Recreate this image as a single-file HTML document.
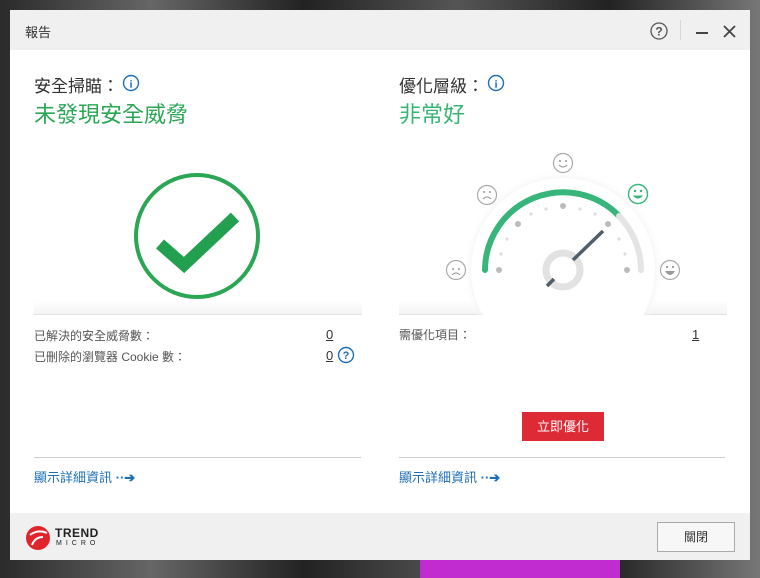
<!DOCTYPE html>
<html><head><meta charset="utf-8"><style>
*{margin:0;padding:0;box-sizing:border-box}
body{width:760px;height:578px;overflow:hidden;background:#3a3a3a;position:relative;font-family:"Liberation Sans","Noto Sans CJK TC",sans-serif;}
.bg1{position:absolute;left:0;top:0;width:760px;height:578px;background:linear-gradient(90deg,#2a2a2a,#666 20%,#222 40%,#555 60%,#222 80%,#777)}
.bg2{position:absolute;left:420px;top:560px;width:200px;height:18px;background:#c02ccf}
.win{position:absolute;left:10px;top:10px;width:740px;height:550px;background:#fff}
.title{position:absolute;left:0;top:0;width:740px;height:40px;background:#f0f0f0}
.foot{position:absolute;left:0;top:503px;width:740px;height:47px;background:#f0f0f0}
.a{position:absolute;white-space:nowrap}
.lbl{font-size:12px;color:#555}
.h{font-size:17px;color:#333}
.g{font-size:22px;color:#2aa654}
.g2{font-size:22px;color:#37b573}
.link{font-size:13px;color:#1d6fb5}
.line{position:absolute;height:1px;background:#cfcfcf}
.shadow{position:absolute;height:14px;background:linear-gradient(#fff,#f4f4f4);}
</style></head><body>
<div class="bg1"></div><div class="bg2"></div>
<div class="win">
 <div class="title">
  <div class="a" style="left:15px;top:12px;font-size:13px;color:#333">報告</div>
  <svg class="a" style="left:639px;top:11px" width="20" height="20"><circle cx="10" cy="10" r="8" fill="none" stroke="#555" stroke-width="1.3"/><text x="10" y="14.5" font-size="12" font-weight="bold" text-anchor="middle" fill="#555" font-family="Liberation Sans">?</text></svg>
  <div class="a" style="left:670px;top:10px;width:1px;height:20px;background:#d8d8d8"></div>
  <div class="a" style="left:686px;top:22px;width:12px;height:2px;background:#444"></div>
  <svg class="a" style="left:713px;top:15px" width="13" height="13"><path d="M1 1L12 12M12 1L1 12" stroke="#444" stroke-width="1.8"/></svg>
 </div>
 <div class="a h" style="left:24px;top:62px">安全掃瞄：</div>
 <svg class="a" style="left:112px;top:64px" width="18" height="18"><circle cx="9" cy="9" r="7.5" fill="none" stroke="#1d6fb5" stroke-width="1.4"/><text x="9" y="13.5" font-size="11" font-weight="bold" text-anchor="middle" fill="#1d6fb5" font-family="Liberation Serif">i</text></svg>
 <div class="a g" style="left:24px;top:87px">未發現安全威脅</div>
 <div class="a h" style="left:389px;top:62px">優化層級：</div>
 <svg class="a" style="left:477px;top:64px" width="18" height="18"><circle cx="9" cy="9" r="7.5" fill="none" stroke="#1d6fb5" stroke-width="1.4"/><text x="9" y="13.5" font-size="11" font-weight="bold" text-anchor="middle" fill="#1d6fb5" font-family="Liberation Serif">i</text></svg>
 <div class="a g2" style="left:389px;top:87px">非常好</div>

 <div class="shadow" style="left:24px;top:290px;width:328px"></div>
 <div class="line" style="left:24px;top:304px;width:328px;background:#e2e2e2"></div>
 <svg class="a" style="left:110px;top:150px" width="160" height="150"><circle cx="77" cy="76" r="61" fill="none" stroke="#2aa654" stroke-width="4"/><path d="M40 84L64 105L115 57" fill="none" stroke="#22a050" stroke-width="12" stroke-linejoin="miter"/></svg>

 <div class="shadow" style="left:389px;top:290px;width:328px"></div>
 <div class="line" style="left:389px;top:304px;width:328px;background:#e2e2e2"></div>
 <svg class="a" style="left:420px;top:130px" width="300" height="175">
  <defs><radialGradient id="sh" cx="0.5" cy="0.5" r="0.5"><stop offset="0.88" stop-color="#ececec"/><stop offset="1" stop-color="#fff" stop-opacity="0"/></radialGradient></defs>
  <circle cx="133" cy="130" r="100" fill="url(#sh)"/>
  <circle cx="133" cy="130" r="92" fill="#fff"/>
  <path d="M55 130A78 78 0 0 1 189 76" fill="none" stroke="#37b57a" stroke-width="6" stroke-linecap="round"/>
  <path d="M189 76A78 78 0 0 1 211 130" fill="none" stroke="#e4e4e4" stroke-width="6" stroke-linecap="round"/>
  <g fill="#bbb"><circle cx="69" cy="130" r="3"/><circle cx="88" cy="84" r="3"/><circle cx="133" cy="66" r="3"/><circle cx="178" cy="84" r="3"/><circle cx="197" cy="130" r="3"/></g>
  <g fill="#ddd"><circle cx="71" cy="114" r="1.6"/><circle cx="77" cy="99" r="1.6"/><circle cx="101" cy="74" r="1.6"/><circle cx="116" cy="69" r="1.6"/><circle cx="150" cy="69" r="1.6"/><circle cx="165" cy="74" r="1.6"/><circle cx="189" cy="99" r="1.6"/><circle cx="195" cy="114" r="1.6"/></g>
  <circle cx="133" cy="130" r="17" fill="none" stroke="#e2e2e2" stroke-width="7"/>
  <path d="M143 120L173 91" stroke="#4f5f6b" stroke-width="3.5"/>
  <path d="M117 146L124 139" stroke="#4f5f6b" stroke-width="3.5"/>
  <g fill="none" stroke="#aaa" stroke-width="1.2">
   <circle cx="26" cy="130" r="9.5"/><circle cx="57" cy="55" r="9.5"/><circle cx="133" cy="23" r="9.5"/><circle cx="240" cy="130" r="9.5"/>
  </g>
  <circle cx="208" cy="54" r="9.5" fill="none" stroke="#37b57a" stroke-width="1.4"/>
  <g fill="#999"><circle cx="23" cy="129" r="1"/><circle cx="29" cy="129" r="1"/><circle cx="54" cy="52" r="1"/><circle cx="60" cy="52" r="1"/><circle cx="130" cy="21" r="1"/><circle cx="136" cy="21" r="1"/><circle cx="237" cy="127" r="1.1"/><circle cx="243" cy="127" r="1.1"/></g>
  <g fill="#37b57a"><circle cx="205" cy="51" r="1.2"/><circle cx="211" cy="51" r="1.2"/></g>
  <path d="M22 135Q26 131 30 135M53 59Q57 55 61 59M129 25Q133 29 137 25" fill="none" stroke="#999" stroke-width="1"/>
  <path d="M204 56Q208 60 212 56Z" fill="#37b57a" stroke="#37b57a"/>
  <path d="M235 131Q240 139 245 131Z" fill="#999"/>
 </svg>

 <div class="a lbl" style="left:24px;top:317px">已解決的安全威脅數：</div>
 <div class="a lbl" style="left:316px;top:317px;text-decoration:underline;color:#333;font-size:13px">0</div>
 <div class="a lbl" style="left:24px;top:338px">已刪除的瀏覽器 Cookie 數：</div>
 <div class="a lbl" style="left:316px;top:338px;text-decoration:underline;color:#333;font-size:13px">0</div>
 <svg class="a" style="left:327px;top:336px" width="18" height="18"><circle cx="9" cy="9" r="7.5" fill="none" stroke="#1d6fb5" stroke-width="1.4"/><text x="9" y="13" font-size="11" font-weight="bold" text-anchor="middle" fill="#1d6fb5">?</text></svg>
 <div class="a lbl" style="left:389px;top:316px">需優化項目：</div>
 <div class="a lbl" style="left:682px;top:317px;text-decoration:underline;color:#333;font-size:13px">1</div>

 <div class="a" style="left:512px;top:402px;width:82px;height:29px;background:#de2a35;color:#fff;font-size:13px;text-align:center;line-height:29px">立即優化</div>

 <div class="line" style="left:24px;top:447px;width:327px"></div>
 <div class="line" style="left:389px;top:447px;width:326px"></div>
 <div class="a link" style="left:24px;top:457px">顯示詳細資訊 <span style="font-weight:bold">··➔</span></div>
 <div class="a link" style="left:389px;top:457px">顯示詳細資訊 <span style="font-weight:bold">··➔</span></div>

 <div class="foot">
  <svg class="a" style="left:15px;top:12px" width="26" height="26"><circle cx="13" cy="13" r="12" fill="#e0242c"/><path d="M5 10Q13 4 22 8M7 20Q10 12 18 12" fill="none" stroke="#fff" stroke-width="2"/></svg>
  <div class="a" style="left:45px;top:13px;font-size:12px;font-weight:bold;color:#222;letter-spacing:0.5px">TREND</div>
  <div class="a" style="left:46px;top:27px;font-size:7px;color:#222;letter-spacing:4px">MICRO</div>
  <div class="a" style="left:647px;top:9px;width:78px;height:30px;border:1px solid #aaa;background:#f7f7f7;font-size:12px;color:#333;text-align:center;line-height:28px">關閉</div>
 </div>
</div>
</body></html>
